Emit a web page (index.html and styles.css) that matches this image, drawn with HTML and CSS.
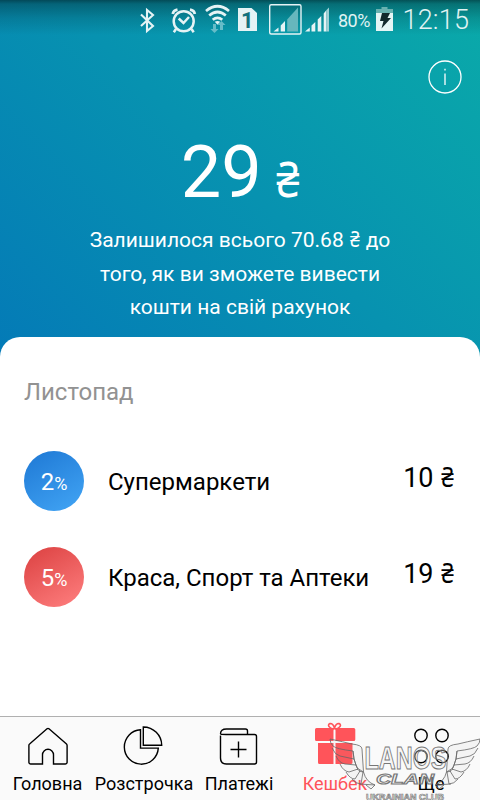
FILE: index.html
```html
<!DOCTYPE html>
<html lang="uk">
<head>
<meta charset="utf-8">
<title>Кешбек</title>
<link rel="stylesheet" href="styles.css">
</head>
<body>
<div class="app">
  <header class="hero">
    <div class="status">
      <svg class="status-icons" viewBox="138 0 194 40" width="194" height="40">
        <path d="M141 14.500 153 26l-6 5V10l6 5-12 11" fill="none" stroke="#e5f3f5" stroke-width="2.100"/>
        <g fill="none" stroke="#e5f3f5" stroke-width="2.500">
          <circle cx="183.700" cy="21.300" r="10"/>
          <path d="M178.700 18.500l4.800 4.500 5.500-6M176 29l-2.200 3.300M191.500 29l2.200 3.300"/>
          <path d="M172.800 14q.5-3.500 4.700-4.300M190 9.700q4.300.8 4.800 4.300" stroke-width="2.800"/>
        </g>
        <g fill="none" stroke="#e5f3f5" stroke-width="2.700">
          <path d="M206 11q11.500-9.500 23 0M209.200 15.500q8.300-7 16.600 0M212.700 19.800q4.800-4 9.600 0"/>
        </g>
        <path d="M214.800 21.700q2.700-1.600 5.400 0L217.500 24.700z" fill="#e5f3f5"/>
        <path d="M213 24h3v5h2.500l-4 4-4-4H213zM220 30v-5h-2.500l4-4 4 4H223v5z" fill="#66bcc8"/>
        <path d="M238 8h13.500l5.500 5v18h-19z" fill="#e5f3f5"/>
        <text x="247.300" y="27.500" class="sim">1</text>
        <rect x="269.700" y="4.700" width="31.300" height="29.300" rx="1.500" fill="none" stroke="#e5f3f5" stroke-width="1.400"/>
        <path d="M273.500 31.500l5-4v4zM280.700 25.500l4.300-4.500v10.500h-4.300z" fill="#e5f3f5"/>
        <path d="M287.200 19.500L298 7.500v24h-10.800z" fill="#66b7bd"/>
        <path d="M305 31.500l4.800-4v4zM311.500 25.500l3.800-3.500v9.500h-3.800zM317.700 19.500l3.600-3.500v15.500h-3.600zM323.700 13.500l2.800-3.500v21.500h-2.800z" fill="#e5f3f5"/>
        <path d="M326.500 10l2.500-2.500v24h-2.500z" fill="#9fd0d4"/>
      </svg>
      <span class="percent">80%</span>
      <svg class="battery" viewBox="0 0 18 24" width="18" height="24">
        <path d="M5.500 0h6v2h5.500v4H0V2h5.500z" fill="#69b1b0"/>
        <path d="M0 6h17v18H0z" fill="#e5f5f5"/>
        <path d="M6 6h8l-2.500 5H15L5.500 21.500 7.500 14H4z" fill="#12282c"/>
      </svg>
      <time class="clock">12:15</time>
    </div>
    <svg class="info" viewBox="0 0 36 36" width="36" height="36">
      <circle cx="18" cy="18" r="16" fill="none" stroke="#fff" stroke-width="1.300"/>
      <path d="M18 14.500v11.500M18 9.700v1.800" stroke="#fff" stroke-width="1.300"/>
    </svg>
    <div class="total"><span>29</span><span class="currency">₴</span></div>
    <p class="note">Залишилося всього 70.68 <i>₴</i> до<br>того, як ви зможете вивести<br>кошти на свій рахунок</p>
  </header>
  <main class="sheet">
    <h2 class="month">Листопад</h2>
    <ul class="list">
      <li class="row">
        <span class="rate blue">2<small>%</small></span>
        <span class="name">Супермаркети</span>
        <span class="sum">10 <i>₴</i></span>
      </li>
      <li class="row">
        <span class="rate red">5<small>%</small></span>
        <span class="name">Краса, Спорт та Аптеки</span>
        <span class="sum">19 <i>₴</i></span>
      </li>
    </ul>
  </main>
  <nav class="tabs">
    <a class="tab">
      <svg viewBox="0 0 44 44" width="44" height="44"><path d="M22.500 2.500q1-.7 2 0L42 17.700q.6.600.6 1.400V36q0 1.700-1.700 1.700H29V28.500a5.500 5.500 0 0 0-11 0v9.200H6Q4.400 37.700 4.400 36V19.100q0-.9.7-1.400z" transform="translate(-1.500 -.7)"/></svg>
      <span>Головна</span>
    </a>
    <a class="tab wide">
      <svg viewBox="0 0 44 44" width="44" height="44"><path d="M18.500 2.800a17 17.200 0 1 0 17.800 18.300H18.500z"/><path d="M21.300 0v18.200h18.400A18.500 18.300 0 0 0 21.300 0z"/></svg>
      <span>Розстрочка</span>
    </a>
    <a class="tab pay">
      <svg viewBox="0 0 44 44" width="44" height="44"><path d="M3.500 8.500v22.500q0 6 6 6h28q2 0 2-2V9.500q0-2-2-2H9q-5.500 0-5.500-.5 0-5 6-5h19q2 0 2 2V7.500M21.500 14.500v16M13.500 22.500h16"/></svg>
      <span>Платежі</span>
    </a>
    <a class="tab active">
      <svg viewBox="0 0 44 44" width="44" height="44"><path class="solid" d="M3.500 1h17v13h-17q-1.500 0-1.500-1.500v-10Q2 1 3.500 1zM22.500 1h18.300q1.500 0 1.500 1.500v10q0 1.500-1.500 1.500H22.500zM5 16h15.500v21H6.500Q5 37 5 35.500zM22.500 16h17v19.500q0 1.500-1.500 1.500H22.500z"/><path class="bow" d="M21.500 1Q20-3.800 17-3.500q-3 1.500 0 4t4.500.5Q23-3.800 26-3.500q3 1.500 0 4T21.500 1l-4.500 4M21.500 1l4.500 4"/></svg>
      <span>Кешбек</span>
    </a>
    <a class="tab more">
      <svg viewBox="0 0 44 44" width="44" height="44"><circle cx="12" cy="8.500" r="6.200"/><circle cx="33" cy="8.500" r="6.200"/><circle cx="12" cy="29.500" r="6.200"/><circle cx="33" cy="29.500" r="6.200"/></svg>
      <span>Ще</span>
    </a>
  </nav>
  <svg class="badge" viewBox="328 736 152 64" width="152" height="64">
    <defs>
      <g id="wing">
        <path d="M330 739q14 3 22 5 10 1 10 5l1.500 23-6.500-4-3-9-1-8q-17-2-20-5-3-3-3-7z"/>
        <path d="M332 748q3 7 8 8l14 3-1-8M336 756q3 7 9 8l11 1-2-6M340 764q3 7 9 8l9-3-2-4M346 772q4 7 9 7l5-8-3-2M352 779q4 5 9 5l2-12-4-1M359 784l16 1q-9-3-11.500-13M366 785l5 4 4-4"/>
      </g>
    </defs>
    <use class="wing" href="#wing"/>
    <use class="wing" href="#wing" transform="translate(810 0) scale(-1 1)"/>
    <text class="lanos" x="364.500" y="769" textLength="82" lengthAdjust="spacingAndGlyphs">LANOS</text>
    <text class="clan" x="376" y="784" textLength="58" lengthAdjust="spacingAndGlyphs">CLAN</text>
    <text class="club" x="366" y="799.500" textLength="78" lengthAdjust="spacingAndGlyphs">UKRAINIAN CLUB</text>
  </svg>
</div>
</body>
</html>
```

FILE: styles.css
```css
* { box-sizing: border-box; }
body { margin: 0; font-family: Roboto, "Noto Sans", sans-serif; }
.app {
  position: relative;
  width: 480px;
  height: 800px;
  overflow: hidden;
  display: flex;
  flex-direction: column;
  background: linear-gradient(45deg, #047ab7 0%, #0aaaa9 100%) 0 0 / 480px 360px no-repeat;
}
.hero { height: 337px; display: flex; flex-direction: column; align-items: center; color: #fff; }
.status {
  width: 480px;
  height: 40px;
  flex: none;
  display: flex;
  padding-left: 138px;
  color: #e0f3f3;
  background: linear-gradient(rgba(0,25,30,.6), rgba(0,25,30,.38) 4px, rgba(0,25,30,.16) 18px, transparent 35px);
}
.status-icons { flex: none; }
.percent { width: 44px; padding-left: 6px; font-size: 18px; line-height: 42px; letter-spacing: -.5px; }
.battery { margin-top: 7px; flex: none; }
.clock { margin-left: 8.5px; font-size: 27px; line-height: 41px; letter-spacing: .2px; white-space: nowrap; font-weight: 350; }
.sim { font: 700 22px Roboto, sans-serif; text-anchor: middle; fill: #12717c; }
.info { align-self: flex-end; margin: 19px 17px 0 0; flex: none; }
.total { height: 88px; margin-top: 34px; font-size: 72px; line-height: 88px; display: flex; align-items: baseline; gap: 15px; }
.currency, i { display: inline-block; font-style: normal; font-family: "Noto Sans", sans-serif; line-height: 1; transform: scaleX(.84); }
.currency { font-size: 50px; margin: 0 -2.5px; }
.note { margin: 7px 0 0; font-size: 21px; line-height: 33.5px; text-align: center; white-space: nowrap; }
.sheet { height: 379px; background: #fff; border-radius: 20px 20px 0 0; padding: 40px 25px 0 24px; }
.month { margin: 0; font-size: 24px; font-weight: 400; line-height: 30px; color: #929292; }
.list { list-style: none; margin: 44px 0 0; padding: 0; display: grid; gap: 36px; }
.row { display: flex; align-items: center; height: 60px; font-size: 24px; }
.rate { width: 60px; height: 60px; border-radius: 50%; color: #fff; text-align: center; line-height: 62px; margin-right: 24px; }
.rate small { font-size: 18px; }
.blue { background: linear-gradient(150deg, #1e78d4, #42a5f5); }
.red { background: linear-gradient(150deg, #db4040, #ff8080); }
.name { flex: 1; white-space: nowrap; padding-top: 2px; }
.sum { font-size: 27px; line-height: 32px; margin-top: -7px; white-space: nowrap; }
.tabs { height: 84px; background: #fafafa; border-top: 1px solid #b0b0b0; display: flex; }
.tab { width: 95px; flex: none; display: flex; flex-direction: column; align-items: center; font-size: 18px; line-height: 22px; padding-top: 10px; }
.tab.wide { width: 98px; }
.tab.pay { width: 92px; }
.tab.active { width: 100px; }
.tab.more { width: 92px; }
.tab svg { fill: none; stroke: #000; stroke-width: 1.4; overflow: visible; }
.tab span { margin-top: 2px; }
.tab.active { color: #ff545a; }
.tab.active .solid { fill: #ff545a; stroke: none; }
.tab.active .bow { stroke: #ff545a; stroke-width: 1.6; }
.badge { position: absolute; left: 328px; top: 736px; }
.wing { fill: rgba(150,150,150,.06); stroke: #666; stroke-width: .8; }
.badge text { font-family: "Liberation Sans", sans-serif; font-weight: 700; fill: rgba(240,240,240,.35); stroke: #777; stroke-width: 1; }
.badge .lanos { font-size: 31px; }
.badge .clan { font-size: 15px; font-style: italic; }
.badge .club { font-size: 8.5px; stroke-width: .6; }
```
